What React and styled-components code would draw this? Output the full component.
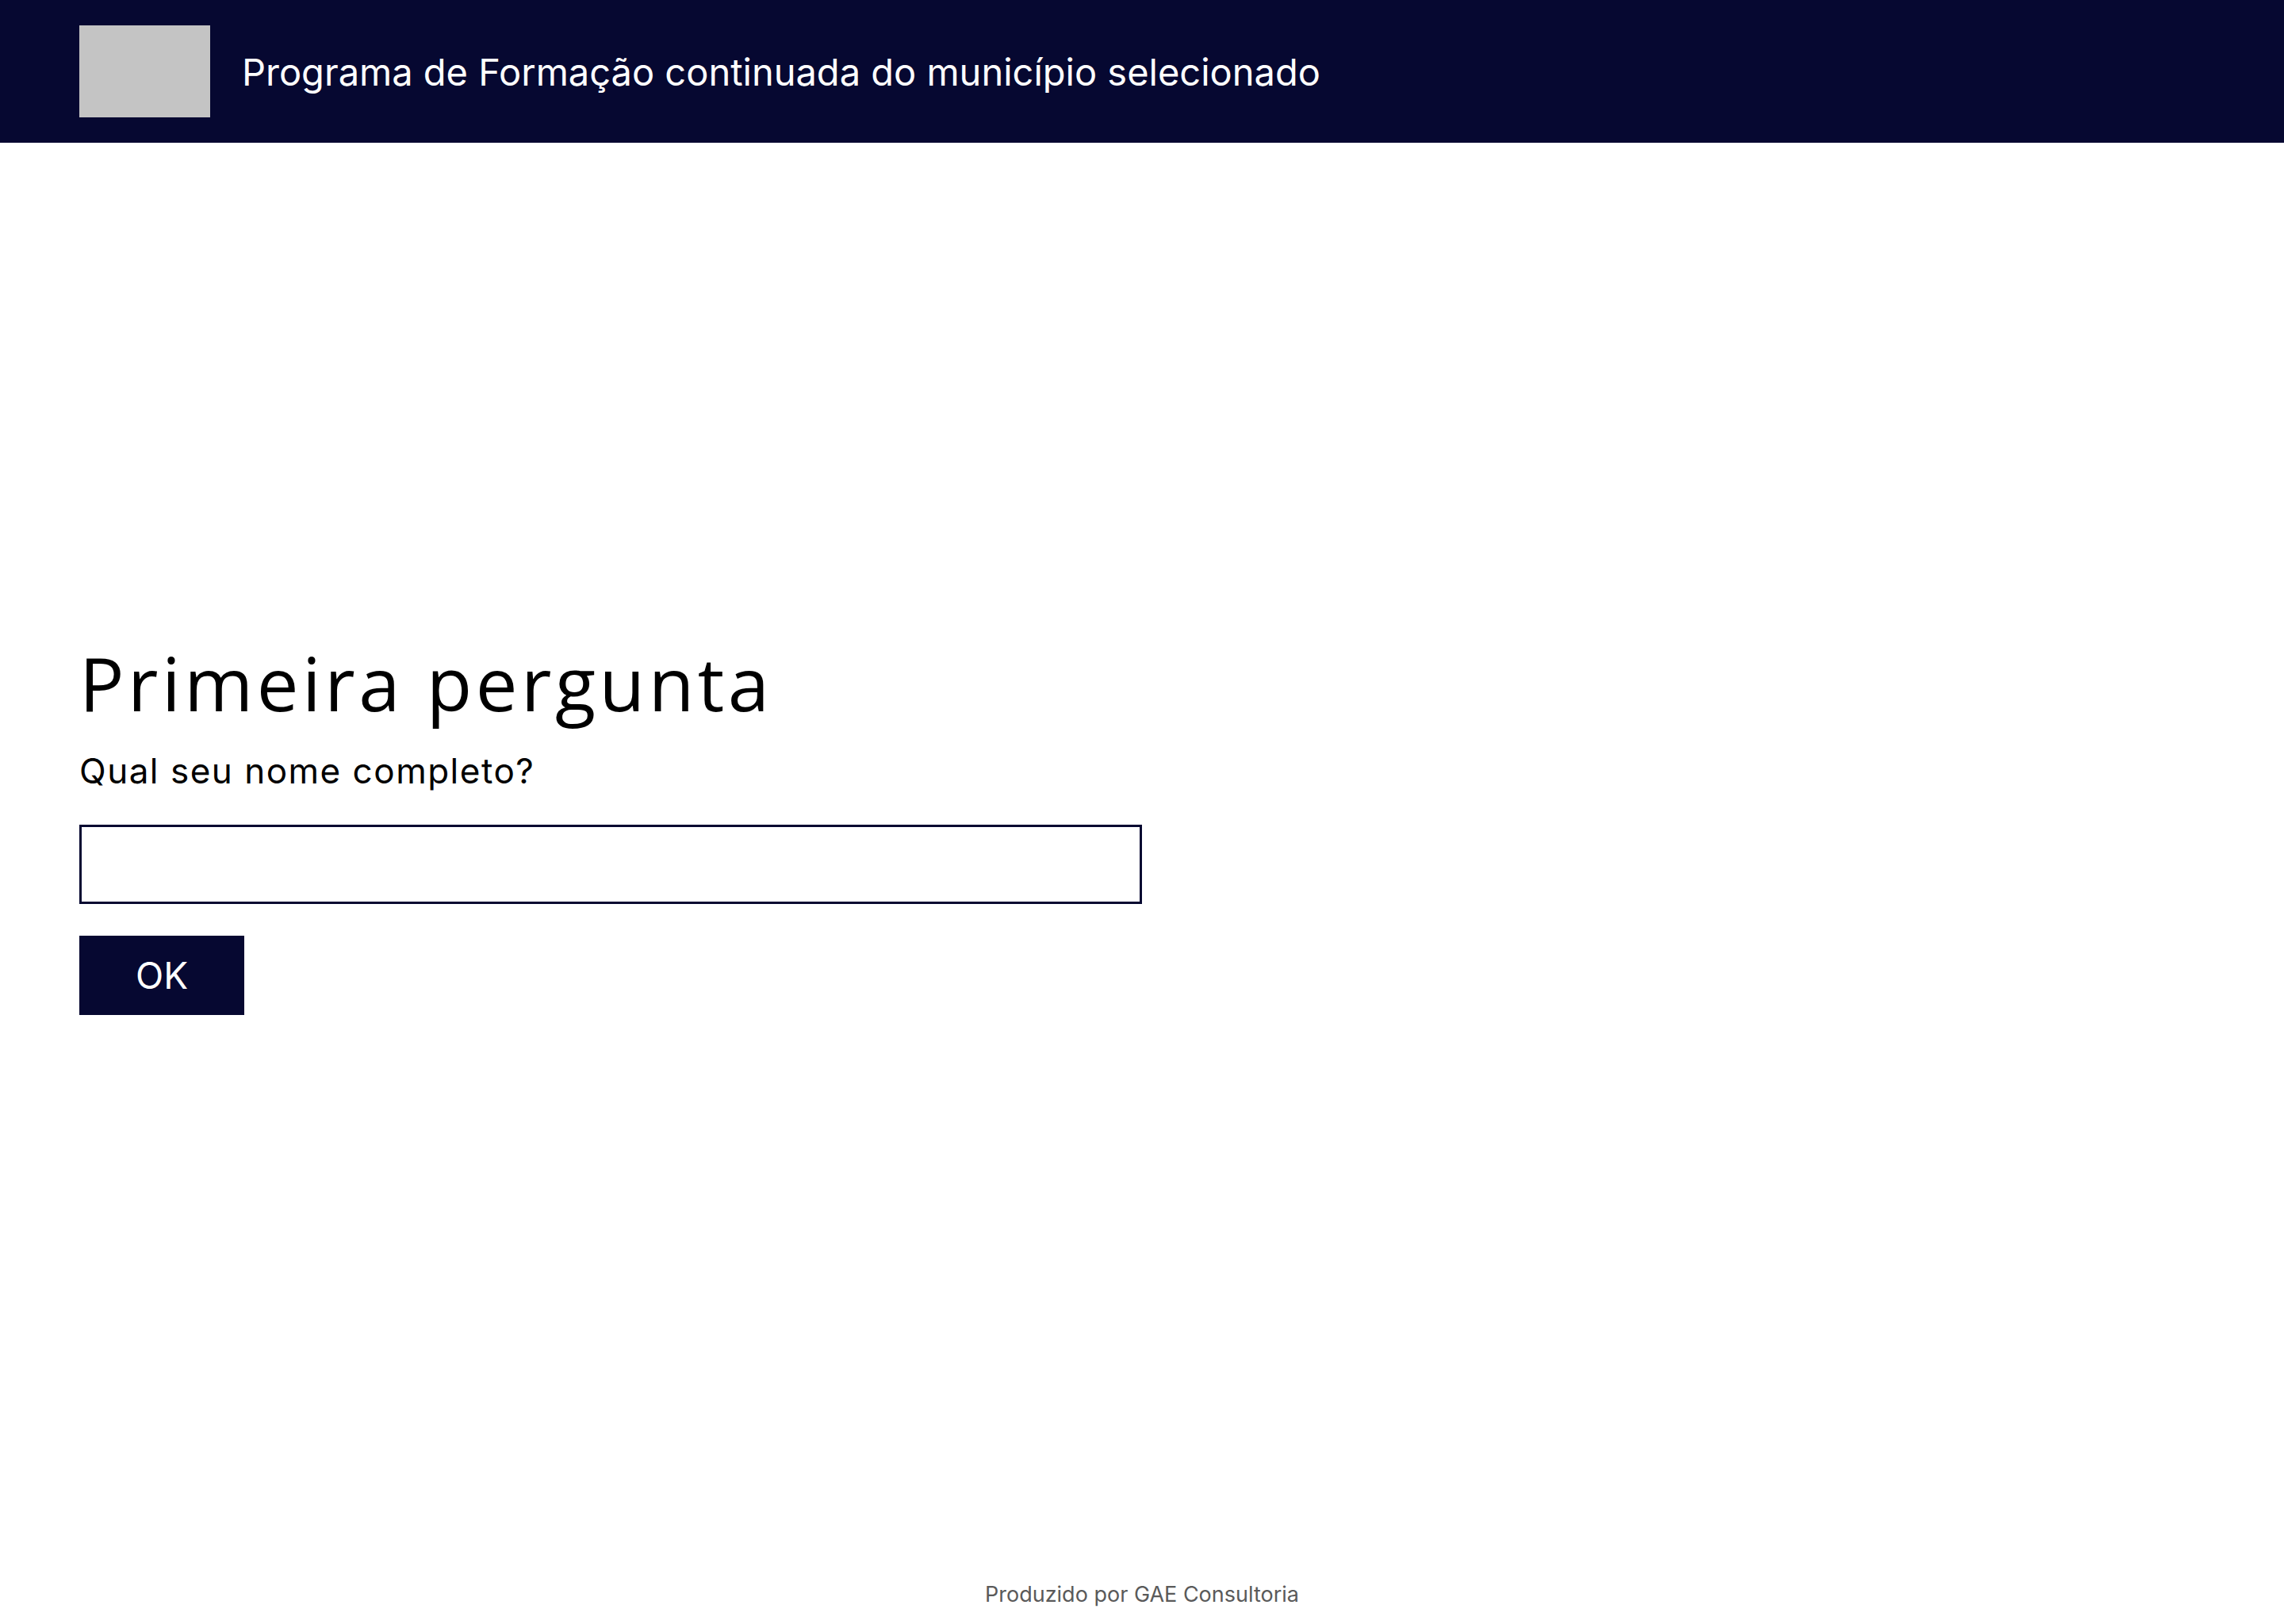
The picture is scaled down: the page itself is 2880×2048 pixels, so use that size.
import React from "react";
import styled, { createGlobalStyle } from "styled-components";

const Global = createGlobalStyle`
  html, body { margin: 0; padding: 0; background: #ffffff; }
  body { font-family: "Inter", "Noto Sans", sans-serif; }
  * { box-sizing: border-box; }
`;

const Page = styled.div`
  min-height: 100vh;
  display: flex;
  flex-direction: column;
`;

const Header = styled.header`
  height: 180px;
  background: #060831;
  display: flex;
  align-items: center;
  padding: 0 100px;
  gap: 40px;
`;

const Logo = styled.div`
  width: 165px;
  height: 116px;
  background: #c4c4c4;
`;

const HeaderTitle = styled.h1`
  margin: 0;
  color: #ffffff;
  font-family: "Inter", "Noto Sans", sans-serif;
  font-weight: 400;
  font-size: 47px;
  line-height: 1;
`;

const Main = styled.main`
  flex: 1;
  padding: 634px 100px 0;
  display: flex;
  flex-direction: column;
  align-items: flex-start;
`;

const Heading = styled.h2`
  margin: 0;
  font-family: "Open Sans", "Noto Sans", sans-serif;
  font-weight: 400;
  font-size: 94px;
  letter-spacing: 4.5px;
  line-height: 1;
  color: #000;
`;

const Question = styled.p`
  margin: 42px 0 0;
  font-family: "Inter", "Noto Sans", sans-serif;
  font-size: 44px;
  letter-spacing: 1.5px;
  line-height: 1;
  color: #000;
`;

const Input = styled.input`
  margin-top: 46px;
  width: 1340px;
  height: 100px;
  border: 3px solid #060831;
  border-radius: 0;
  font-size: 40px;
  padding: 0 20px;
  outline: none;
`;

const Button = styled.button`
  margin-top: 40px;
  width: 208px;
  height: 100px;
  border: none;
  border-radius: 0;
  background: #060831;
  color: #fff;
  font-family: "Inter", "Noto Sans", sans-serif;
  font-size: 46px;
  cursor: pointer;
`;

const Footer = styled.footer`
  padding: 0 0 21px;
  text-align: center;
  font-family: "Inter", "Noto Sans", sans-serif;
  font-size: 27px;
  color: #5a5a5a;
`;

export default function App() {
  return (
    <Page>
      <Global />
      <Header>
        <Logo />
        <HeaderTitle>Programa de Formação continuada do município selecionado</HeaderTitle>
      </Header>
      <Main>
        <Heading>Primeira pergunta</Heading>
        <Question>Qual seu nome completo?</Question>
        <Input type="text" />
        <Button>OK</Button>
      </Main>
      <Footer>Produzido por GAE Consultoria</Footer>
    </Page>
  );
}
